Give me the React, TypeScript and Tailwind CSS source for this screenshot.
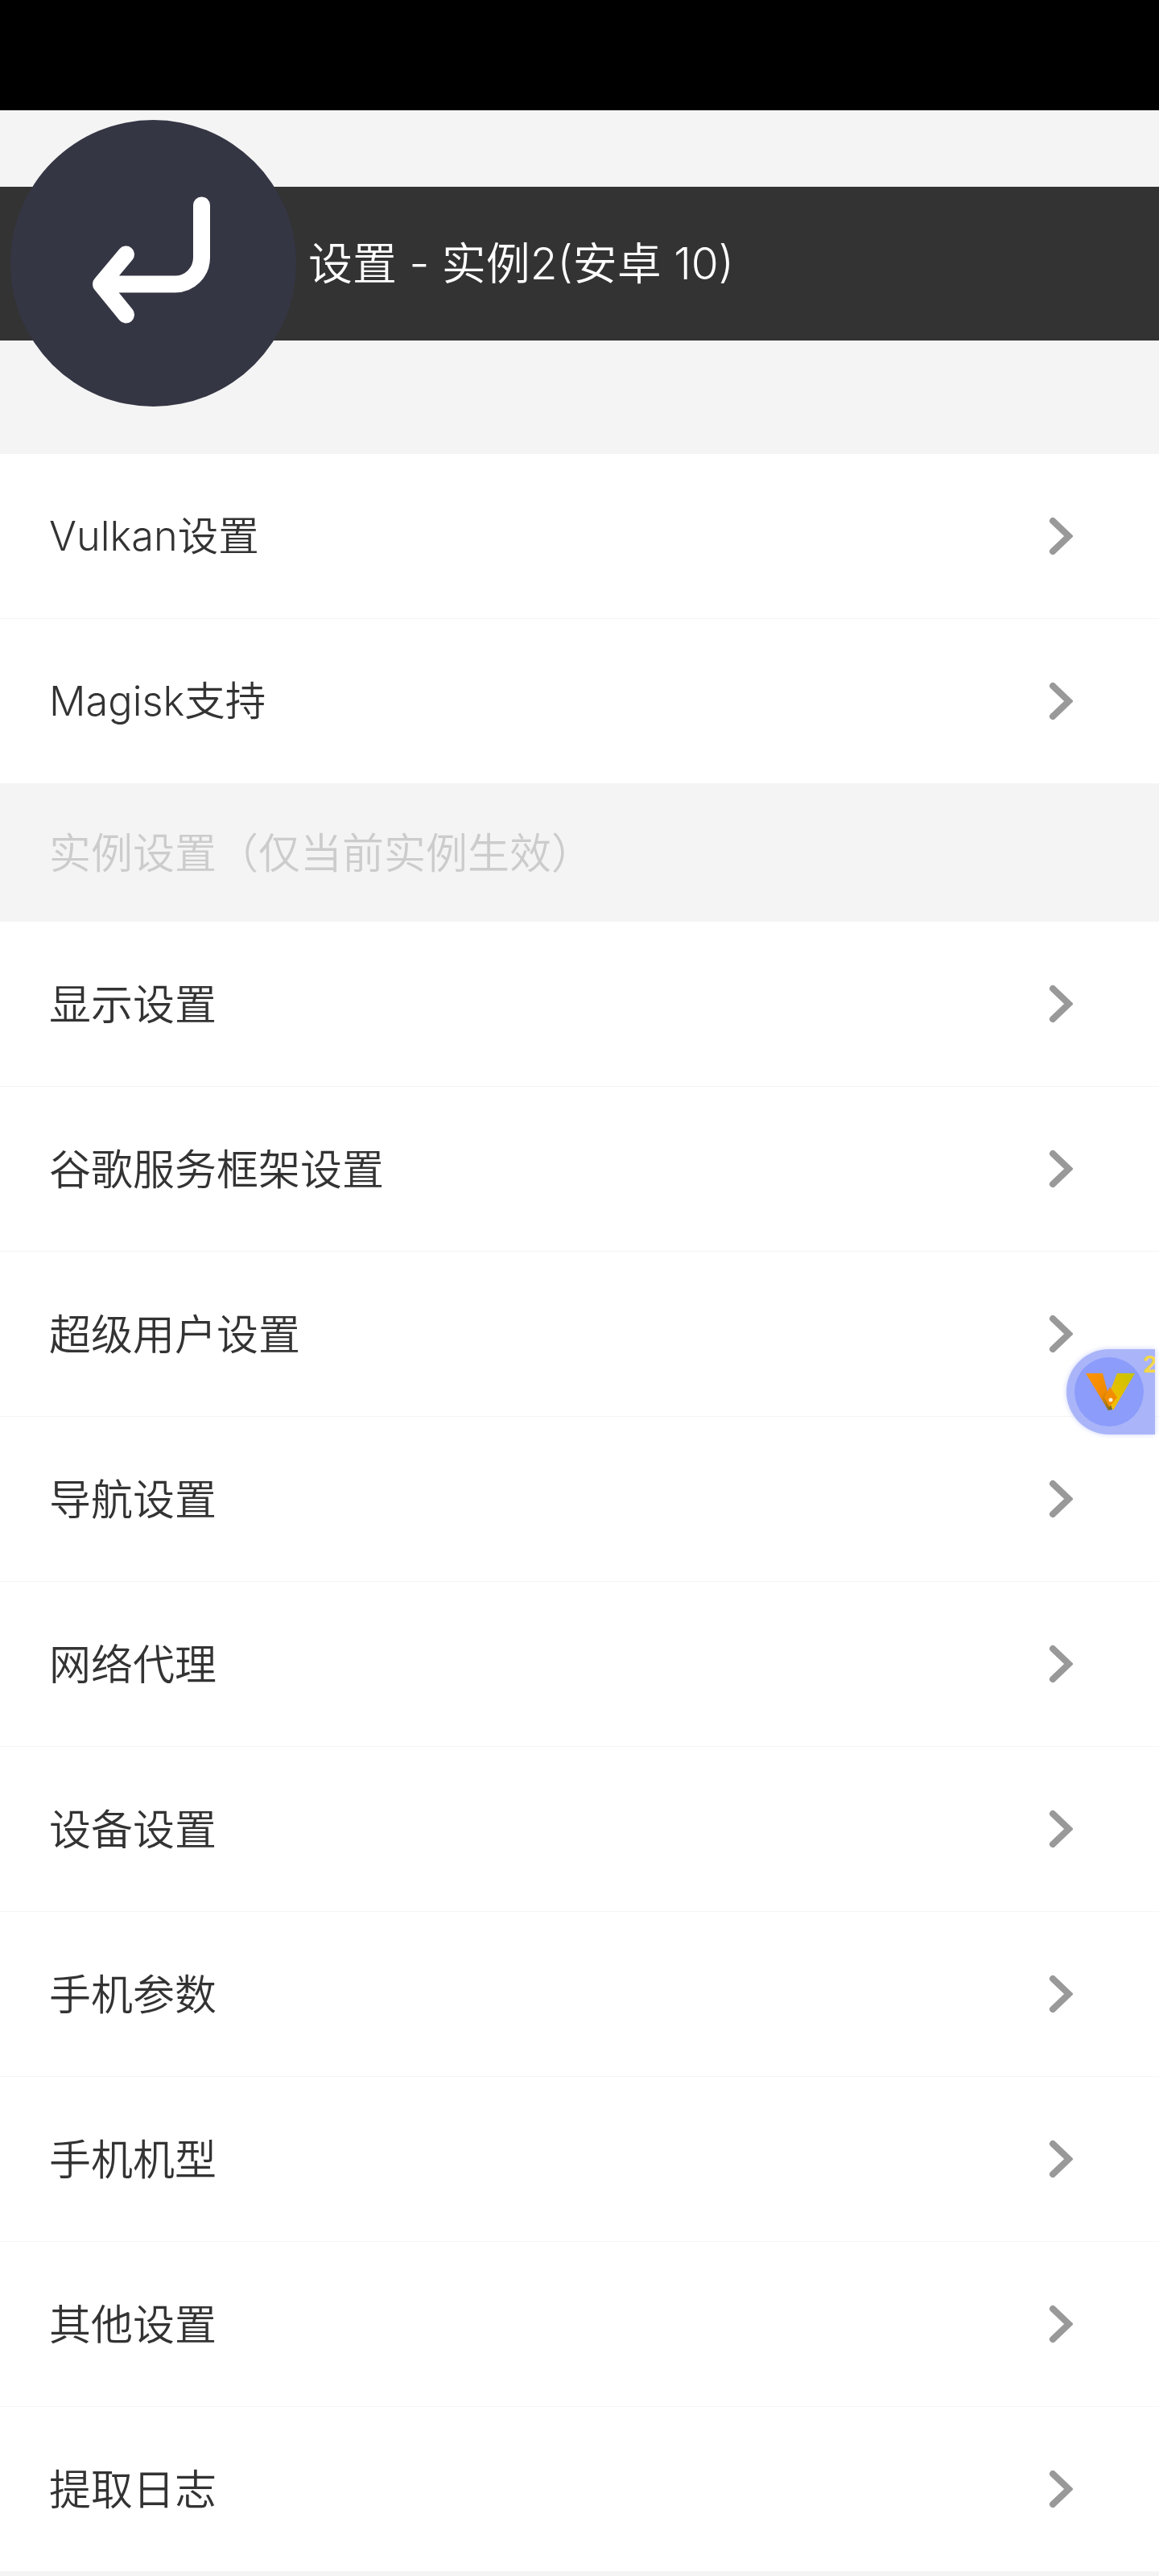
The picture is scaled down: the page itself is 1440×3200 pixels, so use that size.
const topItems = ["Vulkan设置", "Magisk支持"]
const instanceItems = ["显示设置", "谷歌服务框架设置", "超级用户设置", "导航设置", "网络代理", "设备设置", "手机参数", "手机机型", "其他设置", "提取日志"]

const fontStack = "font-['Inter','Noto_Sans_CJK_SC',sans-serif]"

const Chevron = () => (
  <svg width="30" height="50" viewBox="0 0 30 50" fill="none" className="shrink-0">
    <path d="M5 6 L25 25 L5 44" stroke="#999999" strokeWidth="8" strokeLinecap="round" strokeLinejoin="miter" />
  </svg>
)

const Row = ({ label, latin }: { label: string; latin?: boolean }) => (
  <div className="flex h-[205px] items-center justify-between border-b border-[#f5f5f5] bg-white pl-[61px] pr-[107px]">
    <span className={latin ? "text-[50.5px] leading-none font-[350] text-[#333333]" : "pt-[4px] text-[52px] leading-none font-[350] text-[#333333]"}>
      {label}
    </span>
    <Chevron />
  </div>
)

const BackButton = () => (
  <div className="absolute left-[13px] top-[12px] flex h-[356px] w-[355px] items-center justify-center rounded-full bg-[#343644]">
    <svg width="180" height="180" viewBox="0 0 180 180" fill="none">
      <path
        d="M149.5 18 V83 A33 33 0 0 1 116.5 116 H24.5 M55.5 79 L24.5 116 L55.5 154"
        stroke="#ffffff"
        strokeWidth="21"
        strokeLinecap="round"
        strokeLinejoin="round"
      />
    </svg>
  </div>
)

const FloatBadge = () => (
  <div className="absolute right-[5px] top-[1676px] flex h-[106px] w-[110px] items-center overflow-hidden rounded-l-[53px] bg-[#aab5f9] pl-[10px] shadow-[0_0_6px_#ccd3fc]">
    <div className="flex h-[86px] w-[86px] shrink-0 items-center justify-center rounded-full bg-[#8c9cfb] pl-[4px]">
      <svg width="62" height="47" viewBox="0 0 62 47" fill="none">
        <defs>
          <linearGradient id="vLeft" x1="0" y1="0" x2="1" y2="1">
            <stop offset="0" stopColor="#ff9500" />
            <stop offset="0.6" stopColor="#f08a00" />
            <stop offset="1" stopColor="#66681f" />
          </linearGradient>
          <linearGradient id="vRight" x1="0" y1="1" x2="1" y2="0">
            <stop offset="0" stopColor="#ffbb00" />
            <stop offset="1" stopColor="#c4c400" />
          </linearGradient>
        </defs>
        <polygon points="0,0 21,0 33,45 28,46" fill="url(#vLeft)" />
        <polygon points="39,0 61,0 34,46 27,30" fill="url(#vRight)" />
        <polygon points="30,17 39,30 29,42 23,30" fill="#f28c00" />
        <circle cx="31" cy="33" r="2.5" fill="#fff3d0" />
      </svg>
    </div>
    <span className="absolute left-[95px] top-[5px] text-[28px] leading-none font-bold text-[#f5d84c]">2</span>
  </div>
)

export default function App() {
  return (
    <div className={`relative h-[3200px] w-[1440px] overflow-hidden bg-[#f4f4f4] ${fontStack}`}>
      <div className="h-[137px] bg-black" />

      <div className="relative h-[427px] pt-[95px]">
        <div className="flex h-[191px] items-center bg-[#333333] pl-[383px]">
          <span className="text-[55px] leading-none font-[350] text-white">设置 - 实例2(安卓 10)</span>
        </div>
        <BackButton />
      </div>

      {topItems.map((item) => (
        <Row key={item} label={item} latin />
      ))}

      <div className="flex h-[171px] items-center pl-[61px]">
        <span className="pt-[3px] text-[52px] leading-none font-[350] text-[#cccccc]">实例设置（仅当前实例生效）</span>
      </div>

      {instanceItems.map((item) => (
        <Row key={item} label={item} />
      ))}

      <FloatBadge />
    </div>
  )
}
